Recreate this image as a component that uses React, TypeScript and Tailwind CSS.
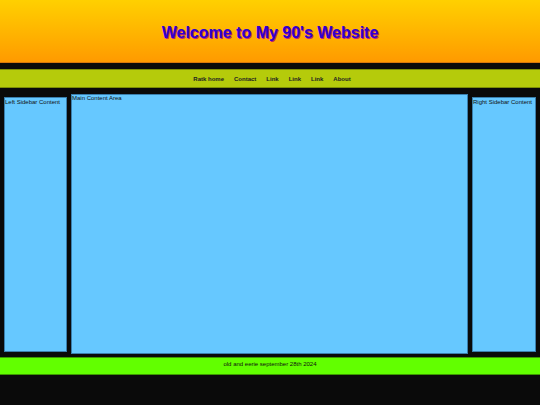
export default function App() {
  const links = ['Ratk home', 'Contact', 'Link', 'Link', 'Link', 'About'];

  return (
    <div className="min-h-[405px] w-[540px] bg-[#0a0a0a] font-['Liberation_Sans',Arial,sans-serif] text-[#111]">
      {/* header */}
      <header className="flex h-[63px] items-center justify-center border-b border-[#d9780a] bg-gradient-to-b from-[#ffd000] to-[#ff9a00] pt-[4px]">
        <h1 className="text-[16px] font-bold text-[#2f00d0] [text-shadow:1px_1px_0_#c0207a]">
          Welcome to My 90's Website
        </h1>
      </header>

      {/* nav */}
      <nav className="mt-[6px] flex h-[19px] items-center justify-center gap-[10px] border-y border-[#7d8f06] bg-[#b5cb0b] pl-[4px]">
        {links.map((l, i) => (
          <a key={i} className="text-[6px] font-bold leading-none text-[#222]">
            {l}
          </a>
        ))}
      </nav>

      {/* columns */}
      <div className="mt-[6px] flex items-start gap-[4px] px-[4px]">
        <aside className="mt-[3px] h-[255px] w-[63px] border border-[#3a7fae] bg-[#66c8ff] text-[6px] leading-[8px]">
          Left Sidebar Content
        </aside>
        <main className="h-[260px] flex-1 border border-[#3a7fae] bg-[#66c8ff] text-[6px] leading-[6px]">
          Main Content Area
        </main>
        <aside className="mt-[3px] h-[255px] w-[64px] border border-[#3a7fae] bg-[#66c8ff] text-[6px] leading-[8px]">
          Right Sidebar Content
        </aside>
      </div>

      {/* footer */}
      <footer className="mt-[3px] h-[18px] border-y border-[#3d9a00] bg-[#62ff00] pt-[2px] text-center text-[6px] leading-[8px]">
        old and eerie september 28th 2024
      </footer>
    </div>
  );
}
